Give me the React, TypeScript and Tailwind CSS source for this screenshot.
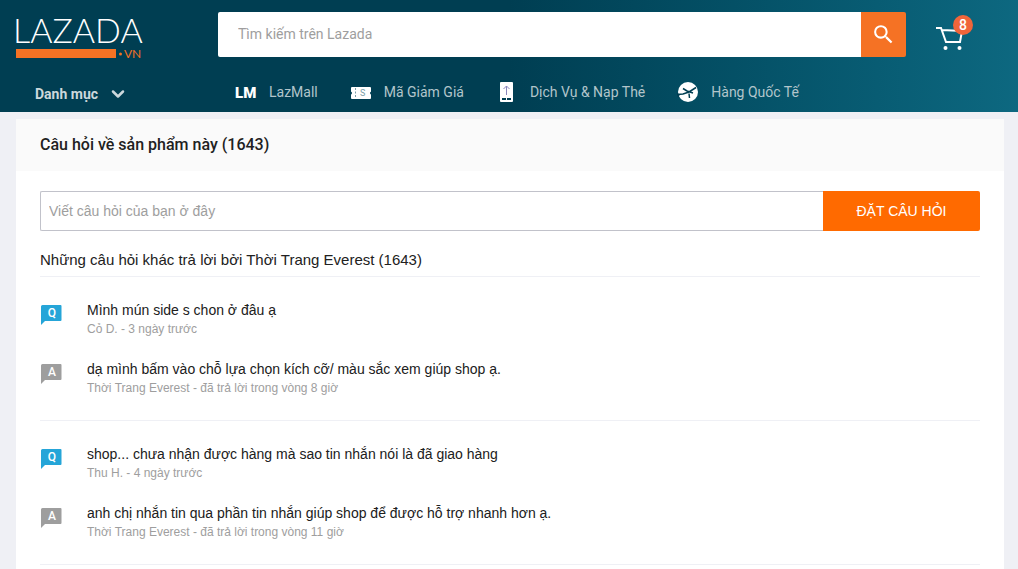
import React, { useState } from 'react';
import { ChevronDown } from 'lucide-react';
import { MdSearch } from 'react-icons/md';

interface Entry {
  text: string;
  meta: string;
}

interface Thread {
  question: Entry;
  answer: Entry;
}

const threads: Thread[] = [
  {
    question: { text: 'Mình mún side s chon ở đâu ạ', meta: 'Cỏ D. - 3 ngày trước' },
    answer: {
      text: 'dạ mình bấm vào chỗ lựa chọn kích cỡ/ màu sắc xem giúp shop ạ.',
      meta: 'Thời Trang Everest - đã trả lời trong vòng 8 giờ',
    },
  },
  {
    question: {
      text: 'shop... chưa nhận được hàng mà sao tin nhắn nói là đã giao hàng',
      meta: 'Thu H. - 4 ngày trước',
    },
    answer: {
      text: 'anh chị nhắn tin qua phần tin nhắn giúp shop để được hỗ trợ nhanh hơn ạ.',
      meta: 'Thời Trang Everest - đã trả lời trong vòng 11 giờ',
    },
  },
];

function Logo() {
  return (
    <a href="#" aria-label="Lazada.vn" className="block w-32 font-['Lato'] text-white">
      <svg width="128" height="46" viewBox="0 0 128 46" className="overflow-visible" aria-hidden="true">
        <text x="-3" y="29" fontWeight="300" fontSize="34" fill="#fff">LAZADA</text>
        <rect x="0" y="35" width="100" height="9" fill="#f57224" />
        <circle cx="104.500" cy="40" r="1.500" fill="#f57224" />
        <text x="108" y="44" fontSize="12" fill="#f57224">VN</text>
      </svg>
    </a>
  );
}

function MallIcon() {
  return (
    <svg width="22" height="22" viewBox="0 0 22 22" className="overflow-visible" aria-hidden="true">
      <text x="0" y="17" fontFamily="Roboto" fontWeight="900" fontSize="15" fill="#fff">LM</text>
    </svg>
  );
}

function VoucherIcon() {
  return (
    <svg width="22" height="22" viewBox="0 0 22 22" aria-hidden="true">
      <rect x="1" y="6" width="20" height="12" rx="1" fill="#fff" />
      <circle cx="0.500" cy="12" r="1.500" fill="#003e52" />
      <circle cx="21.500" cy="12" r="1.500" fill="#003e52" />
      <path d="M5.500 7v10" stroke="#7c9fa9" strokeDasharray="2 1.500" />
      <text x="10" y="15" fontFamily="Roboto" fontSize="9" fill="#7c9fa9">S</text>
    </svg>
  );
}

function TopUpIcon() {
  return (
    <svg width="22" height="22" viewBox="0 0 22 22" aria-hidden="true">
      <rect x="4" y="1" width="13" height="20" rx="1" fill="#fff" />
      <path d="M10.500 14V5M7.500 8l3-3 3 3" fill="none" stroke="#8a86bd" />
      <path d="M6 18h4M11 18h4" stroke="#003e52" strokeWidth="2" />
    </svg>
  );
}

function GlobalIcon() {
  return (
    <svg width="22" height="22" viewBox="0 0 22 22" aria-hidden="true">
      <circle cx="11" cy="11" r="10" fill="#fff" />
      <path d="M0 13.500l6-.5 6-2 7-4.500M6 7.500l4 2.500 6 2M12 12.500l.5 4.500" fill="none" stroke="#003e52" strokeWidth="1.500" />
      <path d="M0 12l3 1.500L1 17z" fill="#003e52" />
    </svg>
  );
}

function CartIcon() {
  return (
    <svg width="30" height="26" viewBox="0 0 30 26" aria-hidden="true">
      <path d="M0 4h5l5 14h14l2-11L6 6" fill="none" stroke="#fff" strokeWidth="2" />
      <circle cx="9.500" cy="24" r="2" fill="#fff" />
      <circle cx="23.500" cy="24" r="2" fill="#fff" />
    </svg>
  );
}

const links = [
  { label: 'LazMall', icon: <MallIcon /> },
  { label: 'Mã Giảm Giá', icon: <VoucherIcon /> },
  { label: 'Dịch Vụ & Nạp Thẻ', icon: <TopUpIcon /> },
  { label: 'Hàng Quốc Tế', icon: <GlobalIcon /> },
];

function Header() {
  return (
    <header className="h-28 bg-linear-to-r from-[#003e52] from-50% to-[#0d6880] font-['Roboto',sans-serif]">
      <div className="flex items-start pt-3 pl-4">
        <div className="w-[202px] shrink-0 pt-0.5">
          <Logo />
        </div>
        <form className="flex h-[45px] flex-1" onSubmit={(e) => e.preventDefault()}>
          <input
            type="search"
            aria-label="Tìm kiếm trên Lazada"
            placeholder="Tìm kiếm trên Lazada"
            className="min-w-0 flex-1 rounded-l-xs bg-white px-5 pb-0.5 text-sm outline-none placeholder:text-[#9e9e9e]"
          />
          <button aria-label="Tìm kiếm" className="flex w-[45px] items-center justify-center rounded-r-xs bg-[#f57224] text-white">
            <MdSearch size={25} />
          </button>
        </form>
        <a href="#" aria-label="Giỏ hàng" className="relative mr-[45px] ml-[30px] block w-[37px] pt-3">
          <CartIcon />
          <span className="absolute top-[3px] right-0 flex size-5 items-center justify-center rounded-full bg-[#f0653a] text-sm font-medium text-white">
            8
          </span>
        </a>
      </div>
      <nav className="flex items-center pt-5 pl-[35px] text-sm text-[#b2c5cb]">
        <button className="flex w-[200px] items-center gap-2.5 pt-1 font-bold text-[#ccd8dc]">
          Danh mục
          <ChevronDown size={20} strokeWidth={3} />
        </button>
        {links.map((link) => (
          <a key={link.label} href="#" className="mr-8 flex items-center gap-3 whitespace-nowrap">
            {link.icon}
            {link.label}
          </a>
        ))}
      </nav>
    </header>
  );
}

function Row({ entry, type }: { entry: Entry; type: 'Q' | 'A' }) {
  return (
    <div className="flex gap-6">
      <span className={`mt-[5px] h-5 w-[23px] shrink-0 ${type === 'Q' ? 'text-[#25a5d8]' : 'text-[#9e9e9e]'}`}>
        <svg width="22" height="20" viewBox="0 0 22 20" aria-label={type}>
          <path d="M2.500 0H20.500a1 1 0 0 1 1 1V15a1 1 0 0 1-1 1H5L1 20V1.500A1.500 1.500 0 0 1 2.500 0z" fill="currentColor" />
          <text x="12" y="12" textAnchor="middle" fontFamily="Roboto" fontWeight="500" fontSize="12" fill="#fff">{type}</text>
        </svg>
      </span>
      <div>
        <p className="text-sm leading-5 text-[#202020]">{entry.text}</p>
        <p className="pt-px text-xs leading-4 text-[#9e9e9e]">{entry.meta}</p>
      </div>
    </div>
  );
}

export default function App() {
  const [question, setQuestion] = useState('');

  return (
    <div className="min-h-screen bg-[#eff0f5] font-['Liberation_Sans',sans-serif] text-[#212121]">
      <Header />
      <main className="mt-[7px] mr-3.5 ml-4 min-h-[450px] bg-white">
        <h1 className="bg-[#fafafa] px-6 py-3.5 font-['Roboto',sans-serif] text-base leading-6 font-medium">
          Câu hỏi về sản phẩm này (1643)
        </h1>
        <div className="px-6 pt-5">
          <form className="flex h-10" onSubmit={(e) => e.preventDefault()}>
            <input
              type="text"
              aria-label="Viết câu hỏi của bạn ở đây"
              placeholder="Viết câu hỏi của bạn ở đây"
              value={question}
              onChange={(e) => setQuestion(e.target.value)}
              className="min-w-0 flex-1 rounded-l-xs border border-r-0 border-[#c1c2ca] px-2 text-sm outline-none placeholder:text-[#9e9e9e]"
            />
            <button className="w-[157px] rounded-r-xs bg-[#ff6a00] text-sm text-white">ĐẶT CÂU HỎI</button>
          </form>
          <h2 className="border-b border-[#eff0f5] pt-[18px] pb-1.5 text-[15px] leading-[21px]">
            Những câu hỏi khác trả lời bởi Thời Trang Everest (1643)
          </h2>
          {threads.map((thread) => (
            <section key={thread.question.text} className="flex flex-col gap-[22px] border-b border-[#eff0f5] pt-[23px] pb-6">
              <Row entry={thread.question} type="Q" />
              <Row entry={thread.answer} type="A" />
            </section>
          ))}
        </div>
      </main>
    </div>
  );
}
